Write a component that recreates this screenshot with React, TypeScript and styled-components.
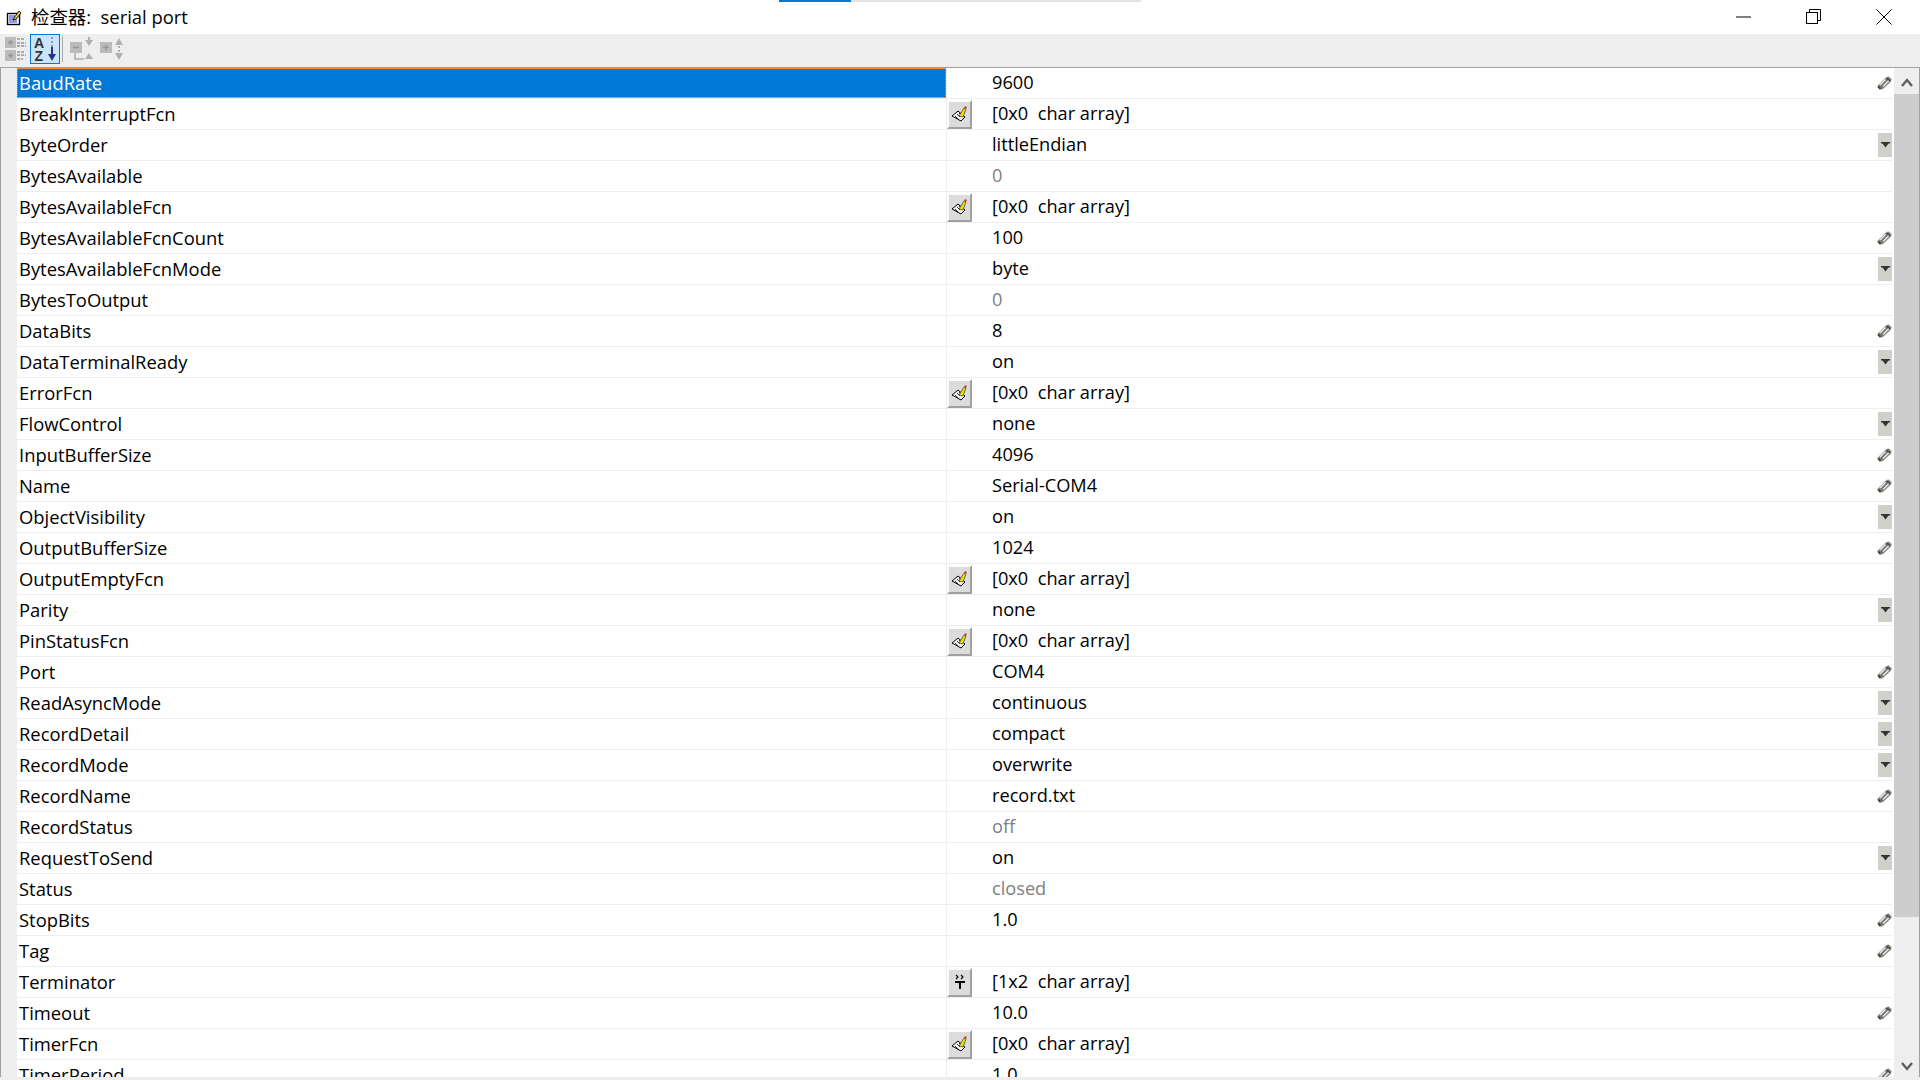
import React from 'react';
import styled, { createGlobalStyle } from 'styled-components';

const Global = createGlobalStyle`
  html, body { margin: 0; padding: 0; background: #fff; overflow: hidden; }
  * { box-sizing: border-box; }
`;

const Page = styled.div`
  position: relative;
  width: 1920px;
  height: 1080px;
  overflow: hidden;
  display: flex;
  flex-direction: column;
  background: #fff;
  font-family: "Open Sans", "Noto Sans", "Noto Sans CJK SC", sans-serif;
  font-size: 18.4px;
  color: #000;
`;
const Progress = styled.div`
  position: absolute;
  left: 779px;
  top: 0;
  width: 362px;
  height: 2px;
  background: #e3e3e3;
  &::before { content: ""; display: block; width: 72px; height: 2px; background: #0078d7; }
`;
const TitleBar = styled.div`
  height: 34px;
  flex: none;
  display: flex;
  align-items: center;
  padding-left: 6px;
  background: #fff;
`;
const TitleText = styled.span`
  margin-left: 9px;
  white-space: pre;
  font-family: "Open Sans", "Noto Sans CJK SC", sans-serif;
  font-size: 18.4px;
  line-height: 34px;
`;
const WindowButtons = styled.div`
  margin-left: auto;
  display: flex;
  align-items: center;
  padding-right: 1px;
`;
const WindowButton = styled.div`
  width: 70px;
  height: 34px;
  display: flex;
  align-items: center;
  justify-content: center;
`;
const Toolbar = styled.div`
  height: 33px;
  flex: none;
  display: flex;
  align-items: center;
  background: #eeeeee;
  padding-left: 4px;
`;
const ToolIcon = styled.div<{ $gap: number }>`
  width: 23px;
  height: 30px;
  margin-top: -3px;
  margin-right: ${p => p.$gap}px;
  display: flex;
  align-items: center;
  justify-content: center;
`;
const ToolActive = styled.div`
  width: 30px;
  height: 30px;
  margin-top: -3px;
  display: flex;
  align-items: center;
  justify-content: center;
  background: #cce4f7;
  border: 1px solid #0078d7;
`;
const ToolDivider = styled.div`
  width: 1px;
  height: 26px;
  margin: -3px 7px 0 2px;
  background: #a9a9a9;
`;
const Grid = styled.div`
  flex: 1;
  min-height: 0;
  display: flex;
  border-top: 1px solid #a0a0a0;
  overflow: hidden;
`;
const Gutter = styled.div`
  width: 17px;
  flex: none;
  background: #eeeeee;
  border-left: 1px solid #a0a0a0;
`;
const Rows = styled.div`
  flex: 1;
  min-width: 0;
  overflow: hidden;
`;
const Row = styled.div`
  height: 31px;
  display: grid;
  grid-template-columns: 929px 1fr;
  border-bottom: 1px solid #eeeeee;
  line-height: 29px;
`;
const NameCell = styled.div<{ $selected?: boolean }>`
  padding-left: 2px;
  white-space: nowrap;
  height: 30px;
  color: ${p => (p.$selected ? '#fff' : '#000')};
  background: ${p => (p.$selected ? '#0078d7' : 'transparent')};
  border-top: ${p => (p.$selected ? '1px solid #e98b3a' : 'none')};
  border-bottom: ${p => (p.$selected ? '1px solid #e98b3a' : 'none')};
  line-height: ${p => (p.$selected ? '27px' : '29px')};
  ${p => p.$selected && 'outline: 1px dotted #e98b3a; outline-offset: -1px;'}
`;
const ValueCell = styled.div`
  position: relative;
  display: flex;
  align-items: center;
  border-left: 1px solid #eeeeee;
  height: 30px;
`;
const BtnSlot = styled.div`
  width: 45px;
  flex: none;
`;
const CellButton = styled.div`
  width: 25px;
  height: 29px;
  display: flex;
  align-items: center;
  justify-content: center;
  background: #dcdcdc;
  border-top: 2px solid #fdfdfd;
  border-left: 2px solid #fdfdfd;
  border-right: 2px solid #a0a0a0;
  border-bottom: 2px solid #a0a0a0;
`;
const Value = styled.span<{ $muted?: boolean }>`
  white-space: pre;
  font-size: 18.2px;
  margin-top: -2px;
  color: ${p => (p.$muted ? '#7f7f7f' : '#000')};
`;
const Trailing = styled.div`
  margin-left: auto;
  width: 17px;
  height: 30px;
  display: flex;
  align-items: center;
  justify-content: center;
`;
const DropBox = styled.div`
  width: 14px;
  height: 24px;
  margin-left: 1px;
  display: flex;
  align-items: center;
  justify-content: center;
  background: #d0d0cb;
`;
const ScrollTrack = styled.div`
  width: 27px;
  flex: none;
  display: flex;
  flex-direction: column;
  background: #eeeeee;
  border-left: 1px solid #fff;
  border-right: 1px solid #a0a0a0;
`;
const ScrollBtn = styled.div<{ $pad: number }>`
  height: 26px;
  flex: none;
  padding-top: ${p => p.$pad}px;
  display: flex;
  align-items: center;
  justify-content: center;
`;
const ScrollThumb = styled.div`
  height: 823px;
  flex: none;
  background: #cdcdcd;
`;
const ScrollRest = styled.div`
  flex: 1;
`;
const BottomEdge = styled.div`
  height: 3px;
  flex: none;
  background: #eeeeee;
`;

const TitleIcon = () => (
  <svg width="16" height="17" viewBox="0 0 16 17">
    <rect x="1.500" y="4.500" width="12" height="11" fill="#fff" stroke="#000" strokeWidth="1.400" />
    <path d="M3 7h6M3 9h8M3 11h8M3 13h8" stroke="#2233bb" strokeWidth="1" />
    <path d="M8 9l5-7 2 2-5 6-3 1z" fill="#f6d43a" stroke="#000" strokeWidth="0.900" />
  </svg>
);
const Categorized = () => (
  <svg width="22" height="24" viewBox="0 0 22 24">
    <rect x="0" y="0" width="11" height="11" fill="#bbbbbb" />
    <rect x="0" y="13" width="11" height="11" fill="#bbbbbb" />
    <path d="M3 5.500h5M5.500 3v5M3 18.500h5M5.500 16v5" stroke="#969696" strokeWidth="1.400" />
    <path d="M12 2h8M12 6h9M12 9h9M12 15h8M12 18h9M12 22h6" stroke="#969696" strokeWidth="1.600" strokeDasharray="3 1" />
  </svg>
);
const SortAZ = () => (
  <svg width="26" height="27" viewBox="0 0 26 27" overflow="visible">
    <text x="2" y="12" fontFamily="Liberation Sans, sans-serif" fontSize="14" fontWeight="700" fill="#333">A</text>
    <text x="2.500" y="25" fontFamily="Liberation Sans, sans-serif" fontSize="14" fontWeight="700" fill="#333">Z</text>
    <path d="M20 1v2M20 5v2M20 9v2" stroke="#6b7ac0" strokeWidth="1.500" />
    <path d="M20 11v8" stroke="#2b2f8f" strokeWidth="2" />
    <path d="M16 18h8l-4 7z" fill="#2b2f8f" />
  </svg>
);
const Expand = () => (
  <svg width="23" height="24" viewBox="0 0 23 24">
    <rect x="0" y="5" width="12" height="11" fill="#bbbbbb" />
    <path d="M3 10.500h6" stroke="#969696" strokeWidth="1.500" />
    <path d="M5 16v6h9" stroke="#bbbbbb" strokeWidth="2" fill="none" />
    <path d="M15 3h8l-4 6zM15 22h8l-4-6z" fill="#b0b0b0" />
    <rect x="18" y="0" width="2" height="3" fill="#b0b0b0" />
  </svg>
);
const Collapse = () => (
  <svg width="23" height="24" viewBox="0 0 23 24">
    <rect x="0" y="5" width="12" height="11" fill="#bbbbbb" />
    <path d="M3 10.500h6M6 7.500v6" stroke="#969696" strokeWidth="1.400" />
    <path d="M15 8h8l-4-7zM15 16h8l-4 7z" fill="#b0b0b0" />
    <rect x="18" y="9" width="2" height="2" fill="#b0b0b0" />
    <rect x="18" y="13" width="2" height="2" fill="#b0b0b0" />
  </svg>
);
const Minimize = () => (
  <svg width="16" height="2" viewBox="0 0 16 2"><path d="M0 1h15" stroke="#000" strokeWidth="1" /></svg>
);
const Restore = () => (
  <svg width="16" height="16" viewBox="0 0 16 16" fill="none" stroke="#000" strokeWidth="1">
    <rect x="0.500" y="3.500" width="11" height="11" />
    <path d="M3.500 3.500v-3h11v11h-3" />
  </svg>
);
const CloseIcon = () => (
  <svg width="16" height="16" viewBox="0 0 16 16"><path d="M0.500 0.500l15 15M15.500 0.500l-15 15" stroke="#000" strokeWidth="1" /></svg>
);
const Chevron = ({ up }: { up?: boolean }) => (
  <svg width="12" height="9" viewBox="0 0 12 9">
    <path d={up ? 'M1 8l5-6 5 6' : 'M1 1l5 6 5-6'} fill="none" stroke="#5f5f5f" strokeWidth="2.400" />
  </svg>
);
const Pencil = () => (
  <svg width="15" height="14" viewBox="0 0 15 14">
    <path d="M0.500 10L9 1.500 11.500 0.500 14.500 3 14 5.500 6 13 2.500 13.500z" fill="#777" stroke="#c9c9a8" strokeWidth="0.700" />
    <path d="M3 9l5.500-5.500M6 10.500l6-6" stroke="#f0f0f0" strokeWidth="1.300" />
    <path d="M1 10.500l2.500 2.500" stroke="#333" strokeWidth="1.400" />
    <path d="M9.500 2l3.500 3" stroke="#444" strokeWidth="1.100" />
  </svg>
);
const DropArrow = () => (
  <svg width="9" height="6" viewBox="0 0 9 6">
    <path d="M0 0h9v1.500H7.500L4.500 5.500 1.500 1.500H0z" fill="#333" />
  </svg>
);
const CallbackIcon = () => (
  <svg width="18" height="18" viewBox="0 0 18 18">
    <path d="M1 11l6-5 7 6-4 4z" fill="#f0f0f0" stroke="#000" strokeWidth="1" />
    <path d="M4 11l3 3M6 9l3 3M8 8l3 3" stroke="#000" strokeWidth="0.800" />
    <path d="M8 11l5-8 2 1-3 8z" fill="#f0e000" stroke="#333" strokeWidth="0.700" />
    <path d="M13 3l1-2 2 1-1 2z" fill="#d0402b" />
  </svg>
);
const TerminatorIcon = () => (
  <svg width="14" height="16" viewBox="0 0 14 16">
    <path d="M3 1l2 2-2 2M8 1l2 2-2 2" fill="none" stroke="#000" strokeWidth="1.100" />
    <path d="M2 7h10v2H8v6H6V9H2z" fill="#000" />
  </svg>
);

type Kind = 'pencil' | 'drop' | 'none';
type Item = { n: string; v: string; k: Kind; btn?: 'cb' | 'term'; muted?: boolean };

const items: Item[] = [
  { n: 'BaudRate', v: '9600', k: 'pencil' },
  { n: 'BreakInterruptFcn', v: '[0x0  char array]', k: 'none', btn: 'cb' },
  { n: 'ByteOrder', v: 'littleEndian', k: 'drop' },
  { n: 'BytesAvailable', v: '0', k: 'none', muted: true },
  { n: 'BytesAvailableFcn', v: '[0x0  char array]', k: 'none', btn: 'cb' },
  { n: 'BytesAvailableFcnCount', v: '100', k: 'pencil' },
  { n: 'BytesAvailableFcnMode', v: 'byte', k: 'drop' },
  { n: 'BytesToOutput', v: '0', k: 'none', muted: true },
  { n: 'DataBits', v: '8', k: 'pencil' },
  { n: 'DataTerminalReady', v: 'on', k: 'drop' },
  { n: 'ErrorFcn', v: '[0x0  char array]', k: 'none', btn: 'cb' },
  { n: 'FlowControl', v: 'none', k: 'drop' },
  { n: 'InputBufferSize', v: '4096', k: 'pencil' },
  { n: 'Name', v: 'Serial-COM4', k: 'pencil' },
  { n: 'ObjectVisibility', v: 'on', k: 'drop' },
  { n: 'OutputBufferSize', v: '1024', k: 'pencil' },
  { n: 'OutputEmptyFcn', v: '[0x0  char array]', k: 'none', btn: 'cb' },
  { n: 'Parity', v: 'none', k: 'drop' },
  { n: 'PinStatusFcn', v: '[0x0  char array]', k: 'none', btn: 'cb' },
  { n: 'Port', v: 'COM4', k: 'pencil' },
  { n: 'ReadAsyncMode', v: 'continuous', k: 'drop' },
  { n: 'RecordDetail', v: 'compact', k: 'drop' },
  { n: 'RecordMode', v: 'overwrite', k: 'drop' },
  { n: 'RecordName', v: 'record.txt', k: 'pencil' },
  { n: 'RecordStatus', v: 'off', k: 'none', muted: true },
  { n: 'RequestToSend', v: 'on', k: 'drop' },
  { n: 'Status', v: 'closed', k: 'none', muted: true },
  { n: 'StopBits', v: '1.0', k: 'pencil' },
  { n: 'Tag', v: '', k: 'pencil' },
  { n: 'Terminator', v: '[1x2  char array]', k: 'none', btn: 'term' },
  { n: 'Timeout', v: '10.0', k: 'pencil' },
  { n: 'TimerFcn', v: '[0x0  char array]', k: 'none', btn: 'cb' },
  { n: 'TimerPeriod', v: '1.0', k: 'pencil' },
];

export default function App() {
  return (
    <Page>
      <Global />
      <Progress />
      <TitleBar>
        <TitleIcon />
        <TitleText>检查器:  serial port</TitleText>
        <WindowButtons>
          <WindowButton><Minimize /></WindowButton>
          <WindowButton><Restore /></WindowButton>
          <WindowButton><CloseIcon /></WindowButton>
        </WindowButtons>
      </TitleBar>
      <Toolbar>
        <ToolIcon $gap={3}><Categorized /></ToolIcon>
        <ToolActive><SortAZ /></ToolActive>
        <ToolDivider />
        <ToolIcon $gap={7}><Expand /></ToolIcon>
        <ToolIcon $gap={7}><Collapse /></ToolIcon>
      </Toolbar>
      <Grid>
        <Gutter />
        <Rows>
          {items.map((it, i) => (
            <Row key={it.n}>
              <NameCell $selected={i === 0}>{it.n}</NameCell>
              <ValueCell>
                <BtnSlot>
                  {it.btn && (
                    <CellButton>{it.btn === 'cb' ? <CallbackIcon /> : <TerminatorIcon />}</CellButton>
                  )}
                </BtnSlot>
                <Value $muted={it.muted}>{it.v}</Value>
                {it.k !== 'none' && (
                  <Trailing>{it.k === 'pencil' ? <Pencil /> : <DropBox><DropArrow /></DropBox>}</Trailing>
                )}
              </ValueCell>
            </Row>
          ))}
        </Rows>
        <ScrollTrack>
          <ScrollBtn $pad={3}><Chevron up /></ScrollBtn>
          <ScrollThumb />
          <ScrollRest />
          <ScrollBtn $pad={4}><Chevron /></ScrollBtn>
        </ScrollTrack>
      </Grid>
      <BottomEdge />
    </Page>
  );
}
